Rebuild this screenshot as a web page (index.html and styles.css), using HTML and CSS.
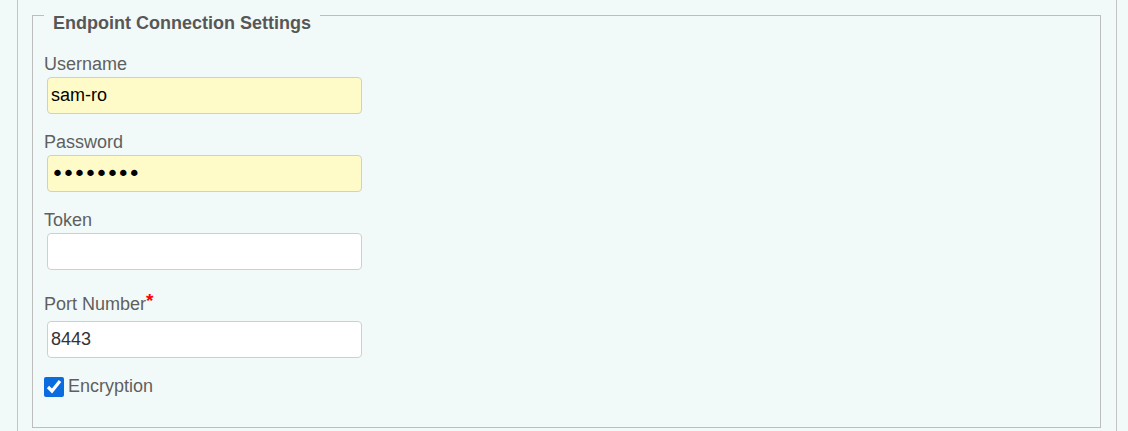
FILE: index.html
```html
<!DOCTYPE html>
<html>
<head>
<meta charset="utf-8">
<link rel="stylesheet" href="styles.css">
</head>
<body>
<div class="panel">
  <fieldset class="group">
    <legend class="group-title">Endpoint Connection Settings</legend>
    <div class="field">
      <label class="field-label" for="u">Username</label>
      <input class="field-input filled" id="u" type="text" value="sam-ro">
    </div>
    <div class="field">
      <label class="field-label" for="p">Password</label>
      <input class="field-input filled secret" id="p" type="password" value="password">
    </div>
    <div class="field">
      <label class="field-label" for="t">Token</label>
      <input class="field-input" id="t" type="text" value="">
    </div>
    <div class="field required">
      <label class="field-label" for="n">Port Number<span class="req">*</span></label>
      <input class="field-input port" id="n" type="text" value="8443">
    </div>
    <div class="check-row">
      <input class="check" id="e" type="checkbox" checked>
      <label class="check-label" for="e">Encryption</label>
    </div>
  </fieldset>
</div>
</body>
</html>
```
FILE: styles.css
```css
html, body {
  margin: 0;
  padding: 0;
  background: #f2faf9;
  font-family: "Liberation Sans", Arial, sans-serif;
}
.panel {
  margin-left: 17px;
  width: 1100px;
  min-height: 431px;
  border-left: 1px solid #c4c4c4;
  border-right: 1px solid #c4c4c4;
  padding: 0 15px 0 14px;
  box-sizing: border-box;
}
.group {
  margin: 0;
  border: 1px solid #bdbdbd;
  padding: 0 11px 30px 11px;
  box-sizing: border-box;
}
.group-title {
  padding: 15px 9px 0 9px;
  font-size: 18px;
  font-weight: bold;
  line-height: 16px;
  color: #575757;
}
.field {
  display: flex;
  flex-direction: column;
  align-items: flex-start;
  margin-top: 18px;
}
.field:first-of-type {
  margin-top: 23px;
}
.field-label {
  font-size: 18px;
  line-height: 20px;
  color: #5f5f5f;
  margin-bottom: 3px;
}
.field.required {
  margin-top: 24px;
}
.field.required .field-label {
  margin-bottom: 7px;
}
.req {
  color: #ff0000;
  font-size: 19px;
  line-height: 0;
  font-weight: bold;
  position: relative;
  top: -3px;
}
.field-input {
  margin: 0 0 0 3px;
  width: 315px;
  height: 37px;
  box-sizing: border-box;
  border: 1px solid #cfcfcf;
  border-radius: 4px;
  background: #ffffff;
  padding: 0 3px;
  font-family: "Liberation Sans", Arial, sans-serif;
  font-size: 18px;
  color: #000;
  outline: none;
}
.field-input.filled {
  background: #fffbc9;
}
.field-input.secret {
  font-family: "DejaVu Sans", sans-serif;
  font-size: 22px;
  letter-spacing: -2px;
  padding-left: 3px;
}
.field-input.port {
  color: #333;
}
.check-row {
  display: flex;
  align-items: center;
  margin-top: 18px;
}
.check {
  margin: 0;
  width: 20px;
  height: 20px;
  accent-color: #0b6ce0;
}
.check-label {
  font-size: 18px;
  color: #5f5f5f;
  margin-left: 4px;
}
```
